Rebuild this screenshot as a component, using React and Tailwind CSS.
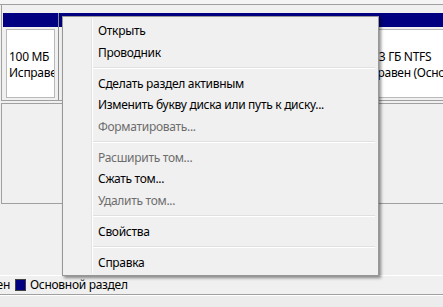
import React from "react";

const items = [
  { t: "Открыть" },
  { t: "Проводник" },
  { sep: true },
  { t: "Сделать раздел активным" },
  { t: "Изменить букву диска или путь к диску..." },
  { t: "Форматировать...", off: true },
  { sep: true },
  { t: "Расширить том...", off: true },
  { t: "Сжать том..." },
  { t: "Удалить том...", off: true },
  { sep: true },
  { t: "Свойства" },
  { sep: true },
  { t: "Справка" },
];

function Partition({ width, lines }) {
  return (
    <div className={`flex flex-col ${width}`}>
      <div className="h-[14px] bg-[#000080]" />
      <div className="flex-1 px-[3px] pt-[2px] pb-[2px]">
        <div className="h-full bg-white border border-[#b9b9b9] pl-[2px] pt-[19px] leading-[16px] whitespace-nowrap overflow-hidden">
          {lines.map((l) => (
            <div key={l}>{l}</div>
          ))}
        </div>
      </div>
    </div>
  );
}

function ContextMenu() {
  return (
    <div className="absolute left-[62px] top-[16px] w-[317px] border border-[#979797] bg-[#f0f0f0] pt-[3px] pb-[2px] shadow-[2px_2px_3px_rgba(0,0,0,0.45)]">
      <div className="absolute left-[28px] top-[2px] bottom-[2px] w-[2px] border-l border-[#e3e3e3] border-r border-r-white" />
      {items.map((it, i) =>
        it.sep ? (
          <div key={i} className="relative h-[9.5px] flex items-center ml-[30px] mr-[3px]">
            <div className="w-full border-t border-[#e0e0e0] border-b border-b-white" />
          </div>
        ) : (
          <div
            key={i}
            className={`relative h-[21.5px] leading-[21.5px] pl-[35px] whitespace-nowrap ${
              it.off ? "text-[#6d6d6d]" : "text-black"
            }`}
          >
            {it.t}
          </div>
        )
      )}
    </div>
  );
}

export default function App() {
  return (
    <div className="relative w-[443px] h-[307px] overflow-hidden bg-[#f0f0f0] font-['Noto_Sans',sans-serif] text-[12px] tracking-[-0.3px] text-black">
      <div className="flex flex-col h-full">
        <div className="h-[4px] bg-[#f4f4f4]" />
        <div className="border-t border-[#a0a0a0]" />

        {/* disk row 1 */}
        <div className="ml-[1px] border-l border-[#a0a0a0] h-[96px] pt-[8px] pl-[1px] flex border-b border-b-[#a0a0a0]">
          <Partition width="w-[55px]" lines={["100 МБ", "Исправен (Система)"]} />
          <div className="w-[3px] border-l border-[#8f8f8f] bg-[#c9c9c9]" />
          <Partition width="w-[137px]" lines={["Локальный диск (C:)", "Исправен (Загрузка)"]} />
          <div className="w-[1px] bg-[#f0f0f0]" />
          <Partition width="w-[140px]" lines={["Данные (D:)", "Исправен (Основной раздел)"]} />
          <div className="w-[2px] bg-[#f0f0f0]" />
          <div className="flex-1 flex flex-col">
            <div className="h-[14px] bg-[#000080]" />
            <div className="flex-1 pl-[3px] pt-[2px] pb-[2px]">
              <div className="h-full bg-white border border-[#b9b9b9] pl-[31px] pt-[19px] leading-[16px] whitespace-nowrap overflow-hidden">
                <div>97,63 ГБ NTFS</div>
                <div>Исправен (Основной раздел)</div>
              </div>
            </div>
          </div>
        </div>

        {/* disk row 2 */}
        <div className="mt-[2px] ml-[1px] h-[101px] border border-[#a0a0a0] border-r-0 bg-[#f0f0f0]" />

        <div className="flex-1" />

        {/* legend */}
        <div className="border-t border-white h-[19px] flex items-center gap-[4px]">
          <div className="w-[10px] overflow-hidden flex justify-end">
            <span className="whitespace-nowrap">Не распределен</span>
          </div>
          <div className="w-[11px] h-[12px] ml-[1px] bg-[#000080] border border-[#404040]" />
          <span className="whitespace-nowrap">Основной раздел</span>
        </div>
        <div className="border-t border-[#a0a0a0] border-b border-b-white" />
        <div className="h-[11px] bg-[#ececec]" />
      </div>

      <ContextMenu />
    </div>
  );
}
